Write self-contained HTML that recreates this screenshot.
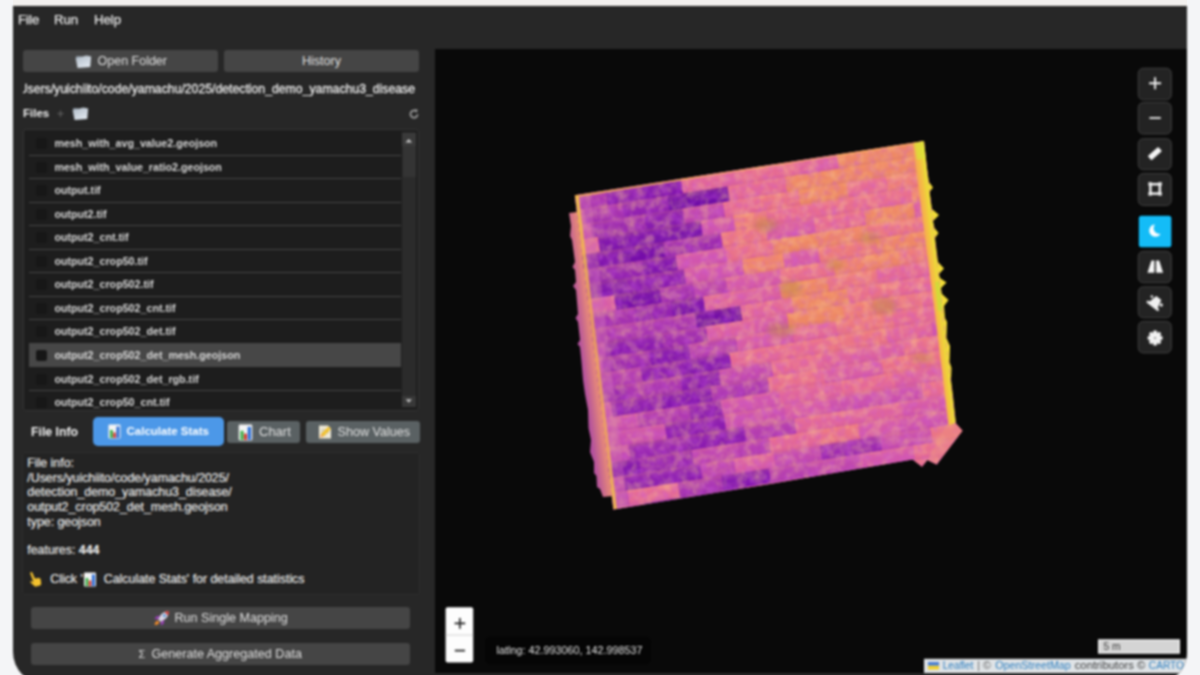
<!DOCTYPE html>
<html lang="en">
<head>
<meta charset="utf-8">
<title>Mapping Tool</title>
<style>
*{box-sizing:border-box;margin:0;padding:0}
html,body{width:1200px;height:675px;overflow:hidden;background:#f4f5f7;font-family:"Liberation Sans",sans-serif;color:#e8e8e8}
.abs{position:absolute}
#titlebar{left:13px;top:0;width:1174px;height:8px;background:#f2f0ee}
#win{left:13px;top:6px;width:1174px;height:678px;background:#272727;border-radius:0 0 32px 32px;overflow:hidden;border-top:1px solid #1c1c1c;filter:blur(0.8px)}
.menu{top:5px;font-size:13.2px;color:#ececec;line-height:16px;-webkit-text-stroke:0.25px #ececec}
.btn{background:#454545;border-radius:3px;color:#e0e0e0;font-size:12.5px;text-align:center;white-space:nowrap}
#path{-webkit-text-stroke:0.3px #ededed;left:10px;top:74.4px;width:392px;height:16px;overflow:hidden;font-size:12.25px;font-weight:normal;color:#ededed;white-space:nowrap;line-height:16px}
#path span{position:absolute;right:0;top:0}
#list{left:10px;top:122px;width:396px;height:282px;background:#1d1d1d;border:1px solid #353535;border-radius:3px;overflow:hidden}
.row{position:absolute;left:5px;width:372px;height:23.55px;border-bottom:1px solid #474747;font-size:10.7px;font-weight:bold;color:#d8d8d8;line-height:23px;padding-left:25.4px;white-space:nowrap}
.row i{position:absolute;left:7px;top:6px;width:11px;height:11px;background:#171717;border-radius:2px}
.row.sel{background:#474747;border-bottom-color:#474747}
.row.sel i{background:#161616}
#info{left:9px;top:445px;width:398px;height:143px;background:#232323;border:1px solid #2d2d2d;border-radius:3px;font-size:12.35px;line-height:14.65px;color:#ececec;padding:3px 4.3px;white-space:nowrap;-webkit-text-stroke:0.2px #ececec}
#map{left:422px;top:42px;width:752px;height:624px;background:#090909;overflow:hidden}
.mbtn{left:703px;width:34px;height:33px;background:#232323;border:1px solid #3a3a3a;border-radius:5px}
.mbtn svg{position:absolute;left:0;top:0}
</style>
</head>
<body>
<div id="titlebar" class="abs"></div>
<div id="win" class="abs">
  <svg width="0" height="0" style="position:absolute"><defs>
    <linearGradient id="fg" x1="0" y1="0" x2="0.6" y2="1"><stop offset="0" stop-color="#aeb9c4"/><stop offset="1" stop-color="#dfe6ee"/></linearGradient>
    <g id="bars"><rect x="0.5" y="0.5" width="12" height="14" rx="1" fill="#f4f4f4"/><rect x="2" y="6" width="2.8" height="8" fill="#3fae4a"/><rect x="5.2" y="8.5" width="2.6" height="5.5" fill="#d9382e"/><rect x="8.4" y="2.5" width="3" height="11.5" fill="#2f6fd6"/></g>
    <g id="memo"><path d="M2 1.5h9l3 3v10h-12z" fill="#efe9d6"/><path d="M4 6h8M4 8.5h8M4 11h5" stroke="#b9b3a0" stroke-width="1"/><path d="M3 13.5l1-3.5l7.5-7.5l2.5 2.5l-7.5 7.5z" fill="#f2c230"/><path d="M3 13.5l1-3.5l2.5 2.5z" fill="#e8a070"/></g>
    <g id="hand"><path d="M3.2 1.2c0-1.3 2.2-1.3 2.3 0l0.5 6.3l3.6 0.7c1.2 0.3 1.8 1 1.6 2.3l-0.7 3.6c-0.2 1-0.8 1.5-1.8 1.5h-3.7c-0.8 0-1.4-0.4-1.8-1.1l-2.4-4.3c-0.6-1.1 0.7-1.9 1.5-1.1l1.3 1.3z" fill="#f4c22e"/></g>
    <g id="rocket"><path d="M15.8 1.2c-3.6-0.2-6.4 1.4-8.6 4.6l-2.2 3.4l2.8 2.8l3.4-2.2c3.2-2.2 4.8-5 4.6-8.6z" fill="#d8d4e2"/><path d="M15.8 1.2c-1.6-0.1-3 0.2-4.2 0.8l3.4 3.4c0.6-1.2 0.9-2.6 0.8-4.2z" fill="#d2342c"/><path d="M7.2 5.8l-3.6 0.4l-2.2 2.6l3 0.6zM11.200 9.800l-0.400 3.600l-2.600 2.200l-0.600-3z" fill="#9b3fb8"/><path d="M4.600 10.600l1.800 1.800c-1 1.800-2.600 2.600-4.800 2.600c0-2.200 1.200-3.600 3-4.400z" fill="#f08a2a"/><circle cx="11.400" cy="5.600" r="1.400" fill="#3f8fd8"/></g>
    <g id="folder"><path d="M1 3.2h4.8l1.2 1.4h7.6v2.2H1z" fill="#8f9aa6"/><path d="M0.6 5.2l10.8-2.6l4.8 0.9l-1 10.4l-12.6 1.2z" fill="url(#fg)"/></g>
  </defs></svg>
  <!-- menu -->
  <div class="abs menu" style="left:5px">File</div>
  <div class="abs menu" style="left:41px">Run</div>
  <div class="abs menu" style="left:81px">Help</div>

  <!-- top buttons -->
  <div class="abs btn" style="left:10px;top:43px;width:195px;height:22px;line-height:22px"><svg style="position:absolute;left:52px;top:3px" width="17" height="16" viewBox="0 0 17 16"><use href="#folder"/></svg><span style="position:absolute;left:74.5px;top:0">Open Folder</span></div>
  <div class="abs btn" style="left:211px;top:43px;width:195px;height:22px;line-height:22px">History</div>

  <div id="path" class="abs"><span>/Users/yuichiito/code/yamachu/2025/detection_demo_yamachu3_disease</span></div>

  <div class="abs" style="left:10px;top:98.7px;font-size:11.5px;font-weight:bold;color:#f0f0f0;line-height:14px">Files</div>
  <div class="abs" style="left:44px;top:99.5px;font-size:12px;font-weight:bold;color:#5a5a5a;line-height:14px">+</div>
  <svg class="abs" style="left:59px;top:97.5px" width="17" height="16" viewBox="0 0 17 16"><use href="#folder"/></svg>
  <svg class="abs" style="left:395px;top:101px" width="12" height="12" viewBox="0 0 12 12"><path d="M9.6 6.2a3.6 3.6 0 1 1 -1.3 -2.9" fill="none" stroke="#9c9c9c" stroke-width="1.7"/><path d="M6.6 1.2l3.4 0.6l-1.6 3z" fill="#9c9c9c"/></svg>

  <!-- file list -->
  <div id="list" class="abs">
    <div class="abs" style="left:378px;top:2px;width:13.5px;height:275px;background:#2b2b2b"></div>
    <div class="abs" style="left:378px;top:265.5px;width:13.5px;height:11.5px;background:#383838"></div>
    <div class="abs" style="left:378px;top:3px;width:13.5px;height:12.5px;background:#3a3a3a"></div>
    <div class="abs" style="left:378.5px;top:16px;width:13px;height:31px;background:#343434"></div>
    <svg class="abs" style="left:378px;top:3px" width="14" height="277" viewBox="0 0 14 277"><path d="M3.4 9.6l3.4-3.6l3.4 3.6z" fill="#c8c8c8"/><path d="M3.6 266.3l3.2 3.4l3.2-3.4z" fill="#c0c0c0"/></svg>
    <div class="row" style="top:2px"><i></i>mesh_with_avg_value2.geojson</div>
    <div class="row" style="top:25.55px"><i></i>mesh_with_value_ratio2.geojson</div>
    <div class="row" style="top:49.1px"><i></i>output.tif</div>
    <div class="row" style="top:72.65px"><i></i>output2.tif</div>
    <div class="row" style="top:96.2px"><i></i>output2_cnt.tif</div>
    <div class="row" style="top:119.75px"><i></i>output2_crop50.tif</div>
    <div class="row" style="top:143.3px"><i></i>output2_crop502.tif</div>
    <div class="row" style="top:166.85px"><i></i>output2_crop502_cnt.tif</div>
    <div class="row" style="top:190.4px"><i></i>output2_crop502_det.tif</div>
    <div class="row sel" style="top:213.95px"><i></i>output2_crop502_det_mesh.geojson</div>
    <div class="row" style="top:237.5px"><i></i>output2_crop502_det_rgb.tif</div>
    <div class="row" style="top:261.05px"><i></i>output2_crop50_cnt.tif</div>
  </div>

  <!-- file info row -->
  <div class="abs" style="left:18px;top:417px;font-size:12.3px;font-weight:bold;color:#f2f2f2;line-height:16px">File Info</div>
  <div class="abs btn" style="left:80px;top:410px;width:130.5px;height:28.6px;line-height:28px;background:#4c98e8;border-radius:5px;font-size:11.5px;font-weight:bold;color:#fff;text-align:left"><svg style="position:absolute;left:15px;top:7px" width="13" height="15" viewBox="0 0 13 15"><use href="#bars"/></svg><span style="position:absolute;left:33.5px;top:0">Calculate Stats</span></div>
  <div class="abs btn" style="left:214px;top:414px;width:73px;height:22px;line-height:22px;background:#5a6163;font-size:13px;text-align:left"><svg style="position:absolute;left:10.5px;top:3px" width="15" height="17" viewBox="0 0 13 15"><use href="#bars"/></svg><span style="position:absolute;left:32px;top:0">Chart</span></div>
  <div class="abs btn" style="left:292.5px;top:414px;width:114px;height:22px;line-height:22px;background:#5a6163;font-size:13px;text-align:left"><svg style="position:absolute;left:11px;top:3px" width="16" height="16" viewBox="0 0 16 16"><use href="#memo"/></svg><span style="position:absolute;left:32px;top:0;font-size:12.6px">Show Values</span></div>

  <div id="info" class="abs">File info:<br>/Users/yuichiito/code/yamachu/2025/<br>detection_demo_yamachu3_disease/<br>output2_crop502_det_mesh.geojson<br>type: geojson<br><br><span style="position:relative;top:-1px">features: <b>444</b></span><br><br><span style="position:relative;top:-1px;left:23px">Click '<span style="display:inline-block;width:21px"></span>Calculate Stats' for detailed statistics</span>
    <svg style="position:absolute;left:6px;top:117.5px;transform:rotate(-18deg)" width="12" height="16" viewBox="0 0 12 16"><use href="#hand"/></svg>
    <svg style="position:absolute;left:60px;top:118.6px" width="14" height="15" viewBox="0 0 13 15"><use href="#bars"/></svg>
  </div>

  <div class="abs btn" style="left:18.4px;top:600.4px;width:379px;height:22px;line-height:22px;font-size:12.6px;text-align:left"><svg style="position:absolute;left:122px;top:3px" width="17" height="17" viewBox="0 0 17 17"><use href="#rocket"/></svg><span style="position:absolute;left:143px;top:0">Run Single Mapping</span></div>
  <div class="abs btn" style="left:18.4px;top:636.4px;width:379px;height:22px;line-height:22px;font-size:12.6px;text-align:left"><span style="position:absolute;left:107px;top:0;font-size:11px">&#931;</span><span style="position:absolute;left:120px;top:0">Generate Aggregated Data</span></div>

  <!-- map -->
  <div id="map" class="abs">
    <svg class="abs" style="left:0;top:0" width="752" height="624" viewBox="435 49 752 624">
      <defs>
        <clipPath id="cp"><polygon points="574.8,195.3 924,141 943,315 955.5,423 962.5,430.7 936.7,464.5 927.3,460 922,466.7 912.7,459.5 780,482.3 613.4,509.5"/></clipPath>
        <filter id="soft" x="-5%" y="-5%" width="110%" height="110%"><feGaussianBlur stdDeviation="0.6"/></filter>
        <filter id="soft2" x="-5%" y="-5%" width="110%" height="110%"><feGaussianBlur stdDeviation="0.45"/></filter>
        <filter id="soft3" x="-20%" y="-20%" width="140%" height="140%"><feGaussianBlur stdDeviation="2.5"/></filter>
        <filter id="noiseA" x="0" y="0" width="100%" height="100%">
          <feTurbulence type="fractalNoise" baseFrequency="0.13" numOctaves="3" seed="3" result="n"/>
          <feColorMatrix in="n" type="matrix" values="0 0 0 0 0.62  0 0 0 0 0.12  0 0 0 0 0.72  0 0 0 1.8 -0.72"/>
        </filter>
        <filter id="noiseB" x="0" y="0" width="100%" height="100%">
          <feTurbulence type="fractalNoise" baseFrequency="0.11" numOctaves="3" seed="11" result="n"/>
          <feColorMatrix in="n" type="matrix" values="0 0 0 0 0.98  0 0 0 0 0.62  0 0 0 0 0.28  0 0 0 1.8 -0.75"/>
        </filter>
        <linearGradient id="rowg" x1="0" y1="0" x2="0" y2="1"><stop offset="0" stop-color="#ffb050" stop-opacity="0.2"/><stop offset="0.3" stop-color="#ff9a90" stop-opacity="0.05"/><stop offset="0.7" stop-color="#5a0a90" stop-opacity="0.0"/><stop offset="1" stop-color="#5a0a90" stop-opacity="0.09"/></linearGradient>
        <linearGradient id="gL" gradientUnits="userSpaceOnUse" x1="574" y1="300" x2="587" y2="298.4"><stop offset="0" stop-color="#b2509e"/><stop offset="1" stop-color="#e88a78"/></linearGradient>
        <linearGradient id="gY" x1="0" y1="0" x2="0" y2="1"><stop offset="0" stop-color="#f4cc40"/><stop offset="0.35" stop-color="#eea458"/><stop offset="0.8" stop-color="#f0a85a"/><stop offset="1" stop-color="#f2c444"/></linearGradient>
        <linearGradient id="gR" gradientUnits="userSpaceOnUse" x1="927" y1="300" x2="941" y2="298.4"><stop offset="0" stop-color="#f09466"/><stop offset="0.55" stop-color="#f6b846"/><stop offset="1" stop-color="#eae034"/></linearGradient>
      </defs>
      <g filter="url(#soft2)">
        <!-- left outer strip -->
        <polygon fill="url(#gL)" points="569,213 577,212 612,496 603,497 600,489 597,487 596.5,476 594,473 594,462 590,452 591,440 588.5,428 588,410 585,394 583,380 581.5,362 580,347 577.5,344 580,340 578,322 575.5,318 578,314 576,290 573,286 576,282 575,270 572.5,267 575,262 572,240 570,236 571,226"/>
        <!-- right spikes -->
        <polygon fill="#f2dc38" points="924,150 929,182 933,187.5 929.5,192 932,209 939,215 933,221 934.5,228 938.5,233 935,238 938,262 944,268.5 939,274 940,278 946.5,282.5 941,288 942,294 948.5,300 944,306 945,318 947,322 946.5,338 950,346 949.5,362 951.5,368 951,380 953,396 956,424 940,424 925,160"/>
        <g clip-path="url(#cp)">
          <rect x="560" y="130" width="420" height="400" fill="#c860b0"/>
          <g filter="url(#soft)">
            <g transform="translate(575,195) rotate(-8.9)">
<rect x="-62" y="-45" width="61" height="15.6" fill="#9f2db0"/>
<rect x="-3" y="-45" width="51" height="15.6" fill="#b33cb0"/>
<rect x="47" y="-45" width="39" height="15.6" fill="#730ea9"/>
<rect x="84" y="-45" width="57" height="15.6" fill="#9626b0"/>
<rect x="140" y="-45" width="36" height="15.6" fill="#e0649d"/>
<rect x="175" y="-45" width="57" height="15.6" fill="#ef7e75"/>
<rect x="231" y="-45" width="54" height="15.6" fill="#ef8964"/>
<rect x="284" y="-45" width="62" height="15.6" fill="#ef8964"/>
<rect x="345" y="-45" width="53" height="15.6" fill="#ec7781"/>
<rect x="397" y="-45" width="33" height="15.6" fill="#ed787f"/>
<rect x="-40" y="-45" width="480" height="15" fill="url(#rowg)"/>
<rect x="-42" y="-30" width="39" height="15.6" fill="#b840af"/>
<rect x="-5" y="-30" width="47" height="15.6" fill="#b03ab0"/>
<rect x="41" y="-30" width="46" height="15.6" fill="#8b1eb0"/>
<rect x="86" y="-30" width="52" height="15.6" fill="#9021b0"/>
<rect x="138" y="-30" width="48" height="15.6" fill="#dc60a1"/>
<rect x="185" y="-30" width="41" height="15.6" fill="#e76b94"/>
<rect x="225" y="-30" width="63" height="15.6" fill="#ef8964"/>
<rect x="287" y="-30" width="54" height="15.6" fill="#ee7c78"/>
<rect x="340" y="-30" width="42" height="15.6" fill="#f07f73"/>
<rect x="382" y="-30" width="35" height="15.6" fill="#ef8964"/>
<rect x="416" y="-30" width="56" height="15.6" fill="#e2669a"/>
<rect x="-40" y="-30" width="480" height="15" fill="url(#rowg)"/>
<rect x="-78" y="-15" width="58" height="15.6" fill="#d357ad"/>
<rect x="-21" y="-15" width="33" height="15.6" fill="#c54baf"/>
<rect x="11" y="-15" width="47" height="15.6" fill="#ce53ae"/>
<rect x="57" y="-15" width="62" height="15.6" fill="#7c14ac"/>
<rect x="119" y="-15" width="52" height="15.6" fill="#df639e"/>
<rect x="170" y="-15" width="56" height="15.6" fill="#eb7386"/>
<rect x="225" y="-15" width="43" height="15.6" fill="#f0826f"/>
<rect x="267" y="-15" width="62" height="15.6" fill="#ef7d77"/>
<rect x="328" y="-15" width="40" height="15.6" fill="#ec7583"/>
<rect x="367" y="-15" width="36" height="15.6" fill="#ef8964"/>
<rect x="402" y="-15" width="38" height="15.6" fill="#ef8964"/>
<rect x="-40" y="-15" width="480" height="15" fill="url(#rowg)"/>
<rect x="-58" y="0" width="39" height="15.6" fill="#b63fb0"/>
<rect x="-20" y="0" width="52" height="15.6" fill="#ac36b0"/>
<rect x="31" y="0" width="36" height="15.6" fill="#8f21b0"/>
<rect x="67" y="0" width="41" height="15.6" fill="#8419af"/>
<rect x="107" y="0" width="62" height="15.6" fill="#e1659b"/>
<rect x="168" y="0" width="60" height="15.6" fill="#e76b93"/>
<rect x="226" y="0" width="39" height="15.6" fill="#e0649d"/>
<rect x="265" y="0" width="52" height="15.6" fill="#ef8964"/>
<rect x="316" y="0" width="36" height="15.6" fill="#ef8964"/>
<rect x="351" y="0" width="41" height="15.6" fill="#ef7d77"/>
<rect x="391" y="0" width="56" height="15.6" fill="#ec7780"/>
<rect x="-40" y="0" width="480" height="15" fill="url(#rowg)"/>
<rect x="-44" y="15" width="50" height="15.6" fill="#c94fae"/>
<rect x="6" y="15" width="40" height="15.6" fill="#a733b0"/>
<rect x="45" y="15" width="47" height="15.6" fill="#9324b0"/>
<rect x="91" y="15" width="62" height="15.6" fill="#6f0ca7"/>
<rect x="152" y="15" width="59" height="15.6" fill="#e56996"/>
<rect x="210" y="15" width="38" height="15.6" fill="#ef8964"/>
<rect x="247" y="15" width="58" height="15.6" fill="#ef8964"/>
<rect x="304" y="15" width="40" height="15.6" fill="#ef8865"/>
<rect x="343" y="15" width="61" height="15.6" fill="#ef8964"/>
<rect x="403" y="15" width="39" height="15.6" fill="#ef8964"/>
<rect x="-40" y="15" width="480" height="15" fill="url(#rowg)"/>
<rect x="-57" y="30" width="36" height="15.6" fill="#a935b0"/>
<rect x="-22" y="30" width="34" height="15.6" fill="#c94eaf"/>
<rect x="11" y="30" width="54" height="15.6" fill="#9b2ab0"/>
<rect x="65" y="30" width="41" height="15.6" fill="#891cb0"/>
<rect x="104" y="30" width="42" height="15.6" fill="#bf46af"/>
<rect x="145" y="30" width="38" height="15.6" fill="#e76b94"/>
<rect x="182" y="30" width="40" height="15.6" fill="#eb7386"/>
<rect x="221" y="30" width="50" height="15.6" fill="#ef8964"/>
<rect x="270" y="30" width="41" height="15.6" fill="#e76b94"/>
<rect x="310" y="30" width="61" height="15.6" fill="#ef7d76"/>
<rect x="370" y="30" width="41" height="15.6" fill="#f08073"/>
<rect x="410" y="30" width="46" height="15.6" fill="#ef8865"/>
<rect x="-40" y="30" width="480" height="15" fill="url(#rowg)"/>
<rect x="-63" y="45" width="37" height="15.6" fill="#bd45af"/>
<rect x="-27" y="45" width="44" height="15.6" fill="#e2669a"/>
<rect x="16" y="45" width="53" height="15.6" fill="#7f16ad"/>
<rect x="68" y="45" width="54" height="15.6" fill="#7a13ab"/>
<rect x="120" y="45" width="34" height="15.6" fill="#d055ae"/>
<rect x="153" y="45" width="34" height="15.6" fill="#ef7d76"/>
<rect x="186" y="45" width="62" height="15.6" fill="#e86c92"/>
<rect x="247" y="45" width="34" height="15.6" fill="#e96f8d"/>
<rect x="279" y="45" width="55" height="15.6" fill="#e96e8f"/>
<rect x="333" y="45" width="43" height="15.6" fill="#f0836d"/>
<rect x="375" y="45" width="49" height="15.6" fill="#ef7d78"/>
<rect x="-40" y="45" width="480" height="15" fill="url(#rowg)"/>
<rect x="-76" y="60" width="55" height="15.6" fill="#ac36b0"/>
<rect x="-22" y="60" width="60" height="15.6" fill="#8217ae"/>
<rect x="38" y="60" width="44" height="15.6" fill="#750fa9"/>
<rect x="80" y="60" width="59" height="15.6" fill="#9d2bb0"/>
<rect x="138" y="60" width="46" height="15.6" fill="#ec7583"/>
<rect x="183" y="60" width="50" height="15.6" fill="#d85ca6"/>
<rect x="232" y="60" width="52" height="15.6" fill="#e76b93"/>
<rect x="283" y="60" width="51" height="15.6" fill="#ef8964"/>
<rect x="333" y="60" width="35" height="15.6" fill="#da5ea4"/>
<rect x="367" y="60" width="59" height="15.6" fill="#d458ab"/>
<rect x="-40" y="60" width="480" height="15" fill="url(#rowg)"/>
<rect x="-56" y="75" width="55" height="15.6" fill="#a330b0"/>
<rect x="-1" y="75" width="58" height="15.6" fill="#9424b0"/>
<rect x="56" y="75" width="36" height="15.6" fill="#8016ae"/>
<rect x="90" y="75" width="51" height="15.6" fill="#d256ae"/>
<rect x="140" y="75" width="47" height="15.6" fill="#ea718a"/>
<rect x="187" y="75" width="48" height="15.6" fill="#ef8964"/>
<rect x="234" y="75" width="51" height="15.6" fill="#ef8669"/>
<rect x="284" y="75" width="33" height="15.6" fill="#ec7584"/>
<rect x="316" y="75" width="42" height="15.6" fill="#ec7681"/>
<rect x="357" y="75" width="38" height="15.6" fill="#ea7289"/>
<rect x="394" y="75" width="60" height="15.6" fill="#ea7288"/>
<rect x="-40" y="75" width="480" height="15" fill="url(#rowg)"/>
<rect x="-53" y="90" width="53" height="15.6" fill="#a431b0"/>
<rect x="-1" y="90" width="39" height="15.6" fill="#8017ae"/>
<rect x="37" y="90" width="60" height="15.6" fill="#8c1fb0"/>
<rect x="96" y="90" width="59" height="15.6" fill="#d155ae"/>
<rect x="155" y="90" width="42" height="15.6" fill="#f0856a"/>
<rect x="196" y="90" width="37" height="15.6" fill="#d85ca7"/>
<rect x="232" y="90" width="58" height="15.6" fill="#ed7a7c"/>
<rect x="290" y="90" width="54" height="15.6" fill="#ef8866"/>
<rect x="343" y="90" width="38" height="15.6" fill="#ec7682"/>
<rect x="380" y="90" width="47" height="15.6" fill="#ed797e"/>
<rect x="-40" y="90" width="480" height="15" fill="url(#rowg)"/>
<rect x="-65" y="105" width="48" height="15.6" fill="#c84eaf"/>
<rect x="-18" y="105" width="42" height="15.6" fill="#d85ca6"/>
<rect x="23" y="105" width="47" height="15.6" fill="#7711aa"/>
<rect x="69" y="105" width="35" height="15.6" fill="#a531b0"/>
<rect x="103" y="105" width="34" height="15.6" fill="#ba42af"/>
<rect x="136" y="105" width="54" height="15.6" fill="#d75ba7"/>
<rect x="190" y="105" width="57" height="15.6" fill="#ea708b"/>
<rect x="245" y="105" width="34" height="15.6" fill="#f0846c"/>
<rect x="278" y="105" width="34" height="15.6" fill="#ef8767"/>
<rect x="311" y="105" width="58" height="15.6" fill="#ed7a7c"/>
<rect x="368" y="105" width="34" height="15.6" fill="#f0826e"/>
<rect x="401" y="105" width="52" height="15.6" fill="#e1659b"/>
<rect x="-40" y="105" width="480" height="15" fill="url(#rowg)"/>
<rect x="-72" y="120" width="62" height="15.6" fill="#c34aaf"/>
<rect x="-12" y="120" width="54" height="15.6" fill="#a632b0"/>
<rect x="41" y="120" width="38" height="15.6" fill="#9324b0"/>
<rect x="78" y="120" width="33" height="15.6" fill="#7d14ac"/>
<rect x="111" y="120" width="38" height="15.6" fill="#de629e"/>
<rect x="148" y="120" width="41" height="15.6" fill="#db5fa2"/>
<rect x="188" y="120" width="49" height="15.6" fill="#ef8964"/>
<rect x="236" y="120" width="51" height="15.6" fill="#ec7781"/>
<rect x="286" y="120" width="57" height="15.6" fill="#e46897"/>
<rect x="342" y="120" width="60" height="15.6" fill="#ef8964"/>
<rect x="401" y="120" width="55" height="15.6" fill="#ef8964"/>
<rect x="-40" y="120" width="480" height="15" fill="url(#rowg)"/>
<rect x="-58" y="135" width="52" height="15.6" fill="#cc51ae"/>
<rect x="-7" y="135" width="50" height="15.6" fill="#ac37b0"/>
<rect x="42" y="135" width="59" height="15.6" fill="#a834b0"/>
<rect x="100" y="135" width="47" height="15.6" fill="#700ca7"/>
<rect x="146" y="135" width="53" height="15.6" fill="#e36798"/>
<rect x="198" y="135" width="58" height="15.6" fill="#ef8964"/>
<rect x="254" y="135" width="52" height="15.6" fill="#ea7189"/>
<rect x="305" y="135" width="60" height="15.6" fill="#e76b94"/>
<rect x="364" y="135" width="62" height="15.6" fill="#ef8964"/>
<rect x="-40" y="135" width="480" height="15" fill="url(#rowg)"/>
<rect x="-53" y="150" width="60" height="15.6" fill="#b53eb0"/>
<rect x="6" y="150" width="59" height="15.6" fill="#8d1fb0"/>
<rect x="64" y="150" width="46" height="15.6" fill="#a02db0"/>
<rect x="109" y="150" width="50" height="15.6" fill="#dd61a1"/>
<rect x="158" y="150" width="34" height="15.6" fill="#d75ba8"/>
<rect x="191" y="150" width="57" height="15.6" fill="#ef8964"/>
<rect x="247" y="150" width="38" height="15.6" fill="#ef7c78"/>
<rect x="284" y="150" width="43" height="15.6" fill="#eb7584"/>
<rect x="326" y="150" width="37" height="15.6" fill="#e76b94"/>
<rect x="363" y="150" width="48" height="15.6" fill="#e96e8f"/>
<rect x="410" y="150" width="54" height="15.6" fill="#d458ac"/>
<rect x="-40" y="150" width="480" height="15" fill="url(#rowg)"/>
<rect x="-60" y="165" width="61" height="15.6" fill="#c84eaf"/>
<rect x="1" y="165" width="49" height="15.6" fill="#9d2bb0"/>
<rect x="49" y="165" width="42" height="15.6" fill="#8519b0"/>
<rect x="89" y="165" width="49" height="15.6" fill="#b63fb0"/>
<rect x="137" y="165" width="58" height="15.6" fill="#d85ca6"/>
<rect x="194" y="165" width="44" height="15.6" fill="#e36798"/>
<rect x="238" y="165" width="58" height="15.6" fill="#ec7780"/>
<rect x="295" y="165" width="59" height="15.6" fill="#e66a95"/>
<rect x="353" y="165" width="62" height="15.6" fill="#d95da5"/>
<rect x="414" y="165" width="39" height="15.6" fill="#e86d91"/>
<rect x="-40" y="165" width="480" height="15" fill="url(#rowg)"/>
<rect x="-60" y="180" width="51" height="15.6" fill="#e96e8f"/>
<rect x="-10" y="180" width="48" height="15.6" fill="#b13bb0"/>
<rect x="38" y="180" width="45" height="15.6" fill="#8d1fb0"/>
<rect x="82" y="180" width="48" height="15.6" fill="#861ab0"/>
<rect x="128" y="180" width="54" height="15.6" fill="#e66a94"/>
<rect x="181" y="180" width="45" height="15.6" fill="#e86d91"/>
<rect x="225" y="180" width="62" height="15.6" fill="#eb7485"/>
<rect x="286" y="180" width="47" height="15.6" fill="#e36798"/>
<rect x="332" y="180" width="37" height="15.6" fill="#d155ae"/>
<rect x="368" y="180" width="60" height="15.6" fill="#ed787e"/>
<rect x="-40" y="180" width="480" height="15" fill="url(#rowg)"/>
<rect x="-53" y="195" width="39" height="15.6" fill="#9727b0"/>
<rect x="-15" y="195" width="37" height="15.6" fill="#9a29b0"/>
<rect x="21" y="195" width="56" height="15.6" fill="#a934b0"/>
<rect x="76" y="195" width="40" height="15.6" fill="#8b1eb0"/>
<rect x="115" y="195" width="54" height="15.6" fill="#c44baf"/>
<rect x="168" y="195" width="52" height="15.6" fill="#e76b93"/>
<rect x="218" y="195" width="36" height="15.6" fill="#e0649c"/>
<rect x="253" y="195" width="48" height="15.6" fill="#dc60a1"/>
<rect x="301" y="195" width="41" height="15.6" fill="#ea708c"/>
<rect x="340" y="195" width="46" height="15.6" fill="#ee7c78"/>
<rect x="385" y="195" width="44" height="15.6" fill="#d75ba7"/>
<rect x="-40" y="195" width="480" height="15" fill="url(#rowg)"/>
<rect x="-48" y="210" width="52" height="15.6" fill="#cb50ae"/>
<rect x="3" y="210" width="52" height="15.6" fill="#9021b0"/>
<rect x="54" y="210" width="51" height="15.6" fill="#8519af"/>
<rect x="104" y="210" width="59" height="15.6" fill="#ab36b0"/>
<rect x="162" y="210" width="57" height="15.6" fill="#e96f8e"/>
<rect x="218" y="210" width="60" height="15.6" fill="#d95da6"/>
<rect x="277" y="210" width="61" height="15.6" fill="#ea7189"/>
<rect x="337" y="210" width="40" height="15.6" fill="#ef8964"/>
<rect x="376" y="210" width="37" height="15.6" fill="#e46898"/>
<rect x="412" y="210" width="40" height="15.6" fill="#e26699"/>
<rect x="-40" y="210" width="480" height="15" fill="url(#rowg)"/>
<rect x="-73" y="225" width="46" height="15.6" fill="#aa35b0"/>
<rect x="-29" y="225" width="57" height="15.6" fill="#cd52ae"/>
<rect x="27" y="225" width="54" height="15.6" fill="#af39b0"/>
<rect x="80" y="225" width="34" height="15.6" fill="#9021b0"/>
<rect x="112" y="225" width="60" height="15.6" fill="#d155ae"/>
<rect x="171" y="225" width="62" height="15.6" fill="#e0649d"/>
<rect x="233" y="225" width="56" height="15.6" fill="#e76b93"/>
<rect x="287" y="225" width="48" height="15.6" fill="#dc60a1"/>
<rect x="334" y="225" width="35" height="15.6" fill="#da5ea4"/>
<rect x="368" y="225" width="36" height="15.6" fill="#ed797d"/>
<rect x="404" y="225" width="48" height="15.6" fill="#e66a94"/>
<rect x="-40" y="225" width="480" height="15" fill="url(#rowg)"/>
<rect x="-46" y="240" width="39" height="15.6" fill="#c94fae"/>
<rect x="-8" y="240" width="63" height="15.6" fill="#ca4fae"/>
<rect x="53" y="240" width="61" height="15.6" fill="#8d1fb0"/>
<rect x="113" y="240" width="62" height="15.6" fill="#cc51ae"/>
<rect x="174" y="240" width="47" height="15.6" fill="#d75ba8"/>
<rect x="220" y="240" width="47" height="15.6" fill="#cd52ae"/>
<rect x="266" y="240" width="48" height="15.6" fill="#cc51ae"/>
<rect x="313" y="240" width="33" height="15.6" fill="#e96d90"/>
<rect x="345" y="240" width="54" height="15.6" fill="#e66a94"/>
<rect x="398" y="240" width="47" height="15.6" fill="#da5ea4"/>
<rect x="-40" y="240" width="480" height="15" fill="url(#rowg)"/>
<rect x="-56" y="255" width="39" height="15.6" fill="#cb50ae"/>
<rect x="-18" y="255" width="33" height="15.6" fill="#c44aaf"/>
<rect x="14" y="255" width="60" height="15.6" fill="#9827b0"/>
<rect x="73" y="255" width="59" height="15.6" fill="#8d1fb0"/>
<rect x="131" y="255" width="52" height="15.6" fill="#b43db0"/>
<rect x="182" y="255" width="48" height="15.6" fill="#e36799"/>
<rect x="229" y="255" width="62" height="15.6" fill="#e0649c"/>
<rect x="290" y="255" width="60" height="15.6" fill="#d65aa8"/>
<rect x="350" y="255" width="55" height="15.6" fill="#e56996"/>
<rect x="404" y="255" width="45" height="15.6" fill="#c147af"/>
<rect x="-40" y="255" width="480" height="15" fill="url(#rowg)"/>
<rect x="-75" y="270" width="54" height="15.6" fill="#c148af"/>
<rect x="-22" y="270" width="45" height="15.6" fill="#8217ae"/>
<rect x="22" y="270" width="55" height="15.6" fill="#9828b0"/>
<rect x="76" y="270" width="47" height="15.6" fill="#be45af"/>
<rect x="122" y="270" width="33" height="15.6" fill="#b63eb0"/>
<rect x="154" y="270" width="52" height="15.6" fill="#e46897"/>
<rect x="205" y="270" width="40" height="15.6" fill="#ea7288"/>
<rect x="244" y="270" width="43" height="15.6" fill="#d65aa8"/>
<rect x="286" y="270" width="53" height="15.6" fill="#cf54ae"/>
<rect x="337" y="270" width="45" height="15.6" fill="#d95da5"/>
<rect x="381" y="270" width="63" height="15.6" fill="#d256ad"/>
<rect x="-40" y="270" width="480" height="15" fill="url(#rowg)"/>
<rect x="-79" y="285" width="34" height="15.6" fill="#a22fb0"/>
<rect x="-47" y="285" width="51" height="15.6" fill="#bb43af"/>
<rect x="4" y="285" width="45" height="15.6" fill="#8f21b0"/>
<rect x="48" y="285" width="35" height="15.6" fill="#8e20b0"/>
<rect x="82" y="285" width="36" height="15.6" fill="#be46af"/>
<rect x="116" y="285" width="41" height="15.6" fill="#da5ea4"/>
<rect x="156" y="285" width="48" height="15.6" fill="#c34aaf"/>
<rect x="203" y="285" width="62" height="15.6" fill="#9e2cb0"/>
<rect x="264" y="285" width="52" height="15.6" fill="#c84eaf"/>
<rect x="315" y="285" width="57" height="15.6" fill="#ec7683"/>
<rect x="372" y="285" width="56" height="15.6" fill="#e86c91"/>
<rect x="-40" y="285" width="480" height="15" fill="url(#rowg)"/>
<rect x="-77" y="300" width="38" height="15.6" fill="#ae38b0"/>
<rect x="-40" y="300" width="48" height="15.6" fill="#bf46af"/>
<rect x="6" y="300" width="51" height="15.6" fill="#e56996"/>
<rect x="57" y="300" width="46" height="15.6" fill="#a632b0"/>
<rect x="101" y="300" width="49" height="15.6" fill="#8519b0"/>
<rect x="149" y="300" width="42" height="15.6" fill="#b63fb0"/>
<rect x="190" y="300" width="53" height="15.6" fill="#c047af"/>
<rect x="241" y="300" width="54" height="15.6" fill="#d559ab"/>
<rect x="295" y="300" width="42" height="15.6" fill="#e76b93"/>
<rect x="336" y="300" width="34" height="15.6" fill="#e0649c"/>
<rect x="369" y="300" width="38" height="15.6" fill="#e0649c"/>
<rect x="406" y="300" width="60" height="15.6" fill="#d156ae"/>
<rect x="-40" y="300" width="480" height="15" fill="url(#rowg)"/>
<rect x="-42" y="315" width="63" height="15.6" fill="#c44aaf"/>
<rect x="20" y="315" width="60" height="15.6" fill="#861ab0"/>
<rect x="79" y="315" width="46" height="15.6" fill="#7c14ac"/>
<rect x="124" y="315" width="40" height="15.6" fill="#d155ae"/>
<rect x="163" y="315" width="49" height="15.6" fill="#e86c91"/>
<rect x="211" y="315" width="47" height="15.6" fill="#d054ae"/>
<rect x="257" y="315" width="62" height="15.6" fill="#e66a95"/>
<rect x="318" y="315" width="36" height="15.6" fill="#cc51ae"/>
<rect x="354" y="315" width="52" height="15.6" fill="#d65aa8"/>
<rect x="404" y="315" width="35" height="15.6" fill="#e2669a"/>
<rect x="-40" y="315" width="480" height="15" fill="url(#rowg)"/>
<rect x="-45" y="330" width="46" height="15.6" fill="#af39b0"/>
<rect x="0" y="330" width="41" height="15.6" fill="#8e20b0"/>
<rect x="40" y="330" width="50" height="15.6" fill="#740fa9"/>
<rect x="90" y="330" width="49" height="15.6" fill="#bf47af"/>
<rect x="138" y="330" width="63" height="15.6" fill="#e46897"/>
<rect x="199" y="330" width="40" height="15.6" fill="#cf54ae"/>
<rect x="239" y="330" width="36" height="15.6" fill="#ea7288"/>
<rect x="274" y="330" width="52" height="15.6" fill="#cd52ae"/>
<rect x="325" y="330" width="44" height="15.6" fill="#dc60a1"/>
<rect x="368" y="330" width="50" height="15.6" fill="#ee7a7c"/>
<rect x="417" y="330" width="51" height="15.6" fill="#ce53ae"/>
<rect x="-40" y="330" width="480" height="15" fill="url(#rowg)"/>
<rect x="-50" y="345" width="62" height="15.6" fill="#a12eb0"/>
<rect x="11" y="345" width="60" height="15.6" fill="#a531b0"/>
<rect x="71" y="345" width="35" height="15.6" fill="#8519b0"/>
<rect x="105" y="345" width="41" height="15.6" fill="#881bb0"/>
<rect x="145" y="345" width="36" height="15.6" fill="#d357ad"/>
<rect x="180" y="345" width="49" height="15.6" fill="#d65aa9"/>
<rect x="228" y="345" width="53" height="15.6" fill="#db5fa3"/>
<rect x="280" y="345" width="50" height="15.6" fill="#d458ac"/>
<rect x="329" y="345" width="47" height="15.6" fill="#d559aa"/>
<rect x="375" y="345" width="39" height="15.6" fill="#d357ad"/>
<rect x="414" y="345" width="58" height="15.6" fill="#ed787f"/>
<rect x="-40" y="345" width="480" height="15" fill="url(#rowg)"/>
<rect x="-45" y="360" width="57" height="15.6" fill="#a22fb0"/>
<rect x="11" y="360" width="39" height="15.6" fill="#9b2ab0"/>
<rect x="50" y="360" width="46" height="15.6" fill="#9727b0"/>
<rect x="95" y="360" width="44" height="15.6" fill="#b23bb0"/>
<rect x="138" y="360" width="53" height="15.6" fill="#d559aa"/>
<rect x="189" y="360" width="49" height="15.6" fill="#d054ae"/>
<rect x="238" y="360" width="55" height="15.6" fill="#e56995"/>
<rect x="292" y="360" width="44" height="15.6" fill="#d65aa9"/>
<rect x="335" y="360" width="36" height="15.6" fill="#e36798"/>
<rect x="370" y="360" width="35" height="15.6" fill="#db5fa2"/>
<rect x="405" y="360" width="50" height="15.6" fill="#c54baf"/>
<rect x="-40" y="360" width="480" height="15" fill="url(#rowg)"/>
<rect x="-71" y="375" width="35" height="15.6" fill="#c047af"/>
<rect x="-37" y="375" width="39" height="15.6" fill="#b740af"/>
<rect x="2" y="375" width="42" height="15.6" fill="#a12eb0"/>
<rect x="43" y="375" width="55" height="15.6" fill="#8519af"/>
<rect x="97" y="375" width="37" height="15.6" fill="#8e20b0"/>
<rect x="133" y="375" width="44" height="15.6" fill="#c047af"/>
<rect x="176" y="375" width="37" height="15.6" fill="#ba42af"/>
<rect x="211" y="375" width="54" height="15.6" fill="#ad37b0"/>
<rect x="264" y="375" width="61" height="15.6" fill="#cd52ae"/>
<rect x="325" y="375" width="60" height="15.6" fill="#c248af"/>
<rect x="384" y="375" width="42" height="15.6" fill="#e86d91"/>
<rect x="-40" y="375" width="480" height="15" fill="url(#rowg)"/>
            </g>
          </g>
          <g filter="url(#soft2)" opacity="0.5">
            <rect x="560" y="130" width="420" height="400" filter="url(#noiseA)"/>
            <rect x="560" y="130" width="420" height="400" filter="url(#noiseB)"/>
          </g>
          <!-- olive patches -->
          <g filter="url(#soft3)" fill="#b88a3a" opacity="0.4">
            <ellipse cx="766" cy="225" rx="12" ry="7"/>
            <ellipse cx="791" cy="288" rx="11" ry="8"/>
            <ellipse cx="781" cy="330" rx="14" ry="7"/>
            <ellipse cx="884" cy="306" rx="13" ry="8"/>
            <ellipse cx="870" cy="238" rx="10" ry="6"/>
            <ellipse cx="922" cy="358" rx="11" ry="4"/>
            <ellipse cx="835" cy="265" rx="9" ry="5"/>
          </g>
          <!-- left inner lighter band + yellow line -->
          <polygon fill="#d276b0" opacity="0.35" points="578,194 590,192 628,506 616,509"/>
          <polygon fill="url(#gY)" opacity="0.85" points="574.8,195.3 578.6,194.7 617,508.9 613.4,509.5"/>
          <!-- top edge highlights -->
          <polygon fill="#f2b24a" opacity="0.8" points="574.8,195.3 700,175.8 700,177.6 575,197.4"/>
          <polygon fill="#f2b24a" opacity="0.55" points="700,175.8 924,141 924,142.6 700,177.6"/>
          <!-- right yellow strip -->
          <polygon fill="url(#gR)" points="912.5,143 924,141 943,315 955.5,423 948.5,425.5 935.5,318"/>
          <polygon fill="#c9dc3a" opacity="0.8" points="935,282 946,281 948,310 938,311"/>
          <polygon fill="#d8e238" opacity="0.7" points="914,143 924,141 926,158 917,160"/>
          <!-- lower right corner tab -->
          <polygon fill="#ee9080" opacity="0.45" points="945,426 955.5,423 962.5,430.7 936.7,464.5 927.3,460 938,440"/>
        </g>
      </g>
    </svg>
    <svg class="abs" style="left:0;top:0" width="752" height="624" viewBox="435 49 752 624" font-family="Liberation Sans, sans-serif">
      <g transform="translate(-0.2,0)">
      <g fill="#232323" stroke="#414141" stroke-width="1">
        <rect x="1138.5" y="68.3" width="33" height="31.5" rx="5"/>
        <rect x="1138.5" y="102.5" width="33" height="31.5" rx="5"/>
        <rect x="1138.5" y="138.7" width="33" height="31" rx="5"/>
        <rect x="1138.5" y="173.5" width="33" height="32" rx="5"/>
        <rect x="1138.5" y="251.3" width="33" height="31.5" rx="5"/>
        <rect x="1138.5" y="286.8" width="33" height="31" rx="5"/>
        <rect x="1138.5" y="321.4" width="33" height="31.5" rx="5"/>
      </g>
      <rect x="1138" y="214.8" width="34.6" height="33.4" rx="3" fill="#020202"/>
      <rect x="1139" y="215.8" width="32.6" height="31.4" rx="2.5" fill="#14bcf7"/>
      <!-- plus / minus -->
      <path d="M1149.3 83.2h12M1155.3 77.2v12" stroke="#f2f2f2" stroke-width="1.9" fill="none"/>
      <path d="M1149.6 118h11.4" stroke="#d8d8d8" stroke-width="2.2" fill="none"/>
      <!-- ruler -->
      <g transform="translate(1155,153.6) rotate(-41)"><rect x="-7" y="-2.8" width="14" height="5.6" rx="1" fill="#f4f4f4"/></g>
      <!-- frame -->
      <g fill="#ededed"><rect x="1150.6" y="184.2" width="9.4" height="9.4" fill="none" stroke="#ededed" stroke-width="2.5"/>
      <rect x="1148.6" y="182.2" width="3.4" height="3.4"/><rect x="1158.6" y="182.2" width="3.4" height="3.4"/><rect x="1148.6" y="192.2" width="3.4" height="3.4"/><rect x="1158.6" y="192.2" width="3.4" height="3.4"/></g>
      <!-- moon -->
      <path d="M1155.35 224.41A6.2 6.2 0 1 0 1160.95 233.74A5.7 5.7 0 0 1 1155.35 224.41z" fill="#fdfeff"/>
      <!-- road -->
      <path d="M1151.6 260.6h3.1v12.2h-7zM1156.3 260.6h3.1l3.900 12.200h-7z" fill="#f6f6f6"/>
      <path d="M1155.5 262.600v2M1155.5 266.600v2.400M1155.5 270.600v2.200" stroke="#232323" stroke-width="1.3"/>
      <!-- satellite -->
      <g transform="translate(1155,303.2) rotate(38)" fill="#f0f0f0"><path d="M-3.2 -6.5h6.4l2.2 9.500h-10.800z"/><rect x="-7.500" y="2" width="15" height="2.600" rx="1"/><circle cx="6.200" cy="-2.600" r="1.600"/><circle cx="-6.400" cy="-3.400" r="1.300"/></g>
      <!-- gear -->
      <g transform="translate(1155.300,338)" fill="#f2f2f2"><circle r="5.400"/><g id="tooth"><rect x="-1.900" y="-7.400" width="3.800" height="14.800" rx="1.200"/></g><use href="#tooth" transform="rotate(45)"/><use href="#tooth" transform="rotate(90)"/><use href="#tooth" transform="rotate(135)"/><circle r="1.100" fill="#888"/></g>
      </g>

      <!-- leaflet zoom -->
      <rect x="445.6" y="607.3" width="27.6" height="55.2" rx="2" fill="#fdfdfd"/>
      <path d="M445.6 635h27.6" stroke="#d0d0d0" stroke-width="1"/>
      <path d="M454.6 623.4h10.6M459.9 618.1v10.6" stroke="#1c1c1c" stroke-width="1.6" fill="none"/>
      <path d="M454.8 650.6h10.2" stroke="#1c1c1c" stroke-width="1.7" fill="none"/>
      <!-- latlng label -->
      <rect x="485" y="636.5" width="166" height="28" rx="6" fill="#050505"/>
      <text x="496.6" y="654.4" font-size="10.2" fill="#e6e6e6" textLength="146" lengthAdjust="spacingAndGlyphs">latlng: 42.993060, 142.998537</text>
      <!-- scale -->
      <rect x="1098" y="639.5" width="82" height="14" fill="#d4d4d4"/>
      <rect x="1098.75" y="640.25" width="80.5" height="12.5" fill="none" stroke="#efefef" stroke-width="1.5"/>
      <text x="1103.5" y="650" font-size="10.3" fill="#3e3e3e">5 m</text>
      <!-- attribution -->
      <rect x="924" y="658.8" width="270" height="14.2" fill="#dfe3e6"/>
      <rect x="928" y="662" width="11" height="3.8" fill="#4a7fd0"/><rect x="928" y="665.8" width="11" height="3.8" fill="#f2d12c"/>
      <text y="669.4" font-size="10.6" fill="#3c3c3c"><tspan x="942.7" fill="#2f7fbf" textLength="30.7" lengthAdjust="spacingAndGlyphs">Leaflet</tspan><tspan x="977.3" fill="#666">| &#169;</tspan><tspan x="995.2" fill="#2f7fbf" textLength="75.5" lengthAdjust="spacingAndGlyphs">OpenStreetMap</tspan><tspan x="1074.7" textLength="70.7" lengthAdjust="spacingAndGlyphs">contributors &#169;</tspan><tspan x="1148.8" fill="#2f7fbf" textLength="35.2" lengthAdjust="spacingAndGlyphs">CARTO</tspan></text>
    </svg>
  </div>
</div>
</body>
</html>
